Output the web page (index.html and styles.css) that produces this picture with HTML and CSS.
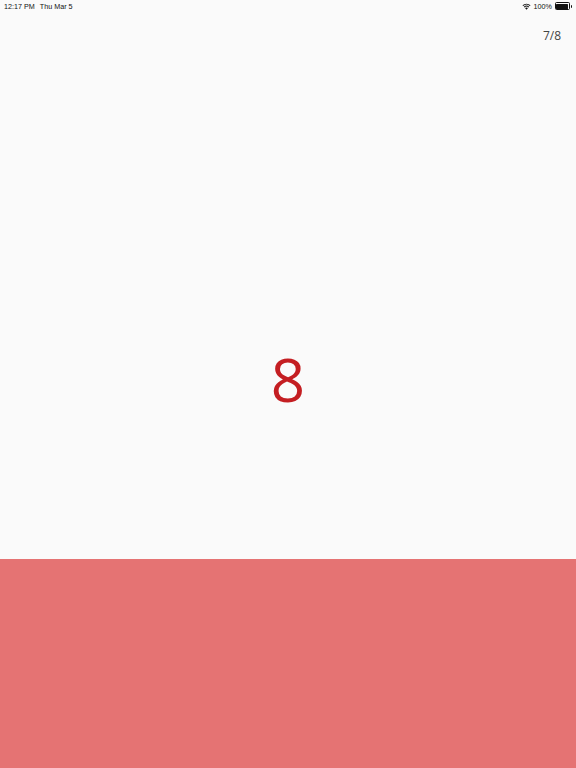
FILE: index.html
```html
<!DOCTYPE html>
<html>
<head>
<meta charset="utf-8">
<link rel="stylesheet" href="styles.css">
</head>
<body>
<div class="screen">
  <div class="status">
    <div class="status-left"><span>12:17 PM</span><span>Thu Mar 5</span></div>
    <div class="status-right">
      <svg class="wifi" width="9" height="7" viewBox="0 0 18 13"><path d="M9 13 L6 9.6 A4.5 4.5 0 0 1 12 9.6 Z M3.6 7 A8 8 0 0 1 14.4 7 L13 8.5 A6 6 0 0 0 5 8.5 Z M1 4.2 A12 12 0 0 1 17 4.2 L15.7 5.7 A10 10 0 0 0 2.3 5.7 Z" fill="#111"/></svg>
      <span>100%</span>
      <span class="battery"><span class="battery-fill"></span></span><span class="nub"></span>
    </div>
  </div>
  <div class="top">
    <div class="counter">7/8</div>
    <div class="digit">8</div>
  </div>
  <div class="bottom"></div>
</div>
</body>
</html>
```
FILE: styles.css
```css
html, body { margin: 0; padding: 0; }
body { width: 576px; height: 768px; overflow: hidden; background: #fafafa; font-family: "Liberation Sans", Arial, sans-serif; }
.screen { display: flex; flex-direction: column; height: 768px; }
.status { height: 12px; display: flex; justify-content: space-between; align-items: center; padding: 0 4px; font-size: 7.2px; color: #111; }
.status-left { display: flex; gap: 5px; }
.status-right { display: flex; align-items: center; gap: 2px; }
.battery { width: 12px; height: 5px; border: 0.8px solid #111; border-radius: 1.5px; padding: 0.6px; display: flex; margin-left: 1px; }
.battery-fill { flex: 1; background: #111; border-radius: 0.6px; }
.nub { width: 1px; height: 3px; background: #111; margin-left: -1px; border-radius: 0 1px 1px 0; }
.top { flex: 0 0 547px; position: relative; display: flex; align-items: center; justify-content: center; }
.counter { position: absolute; top: 15px; right: 15px; font-family: "Open Sans", sans-serif; font-size: 12px; color: #444; }
.digit { font-family: "Open Sans", sans-serif; font-size: 60px; font-weight: 400; color: #c41e22; line-height: 1; margin-top: 186px; }
.bottom { flex: 1; background: #e57373; }
```
